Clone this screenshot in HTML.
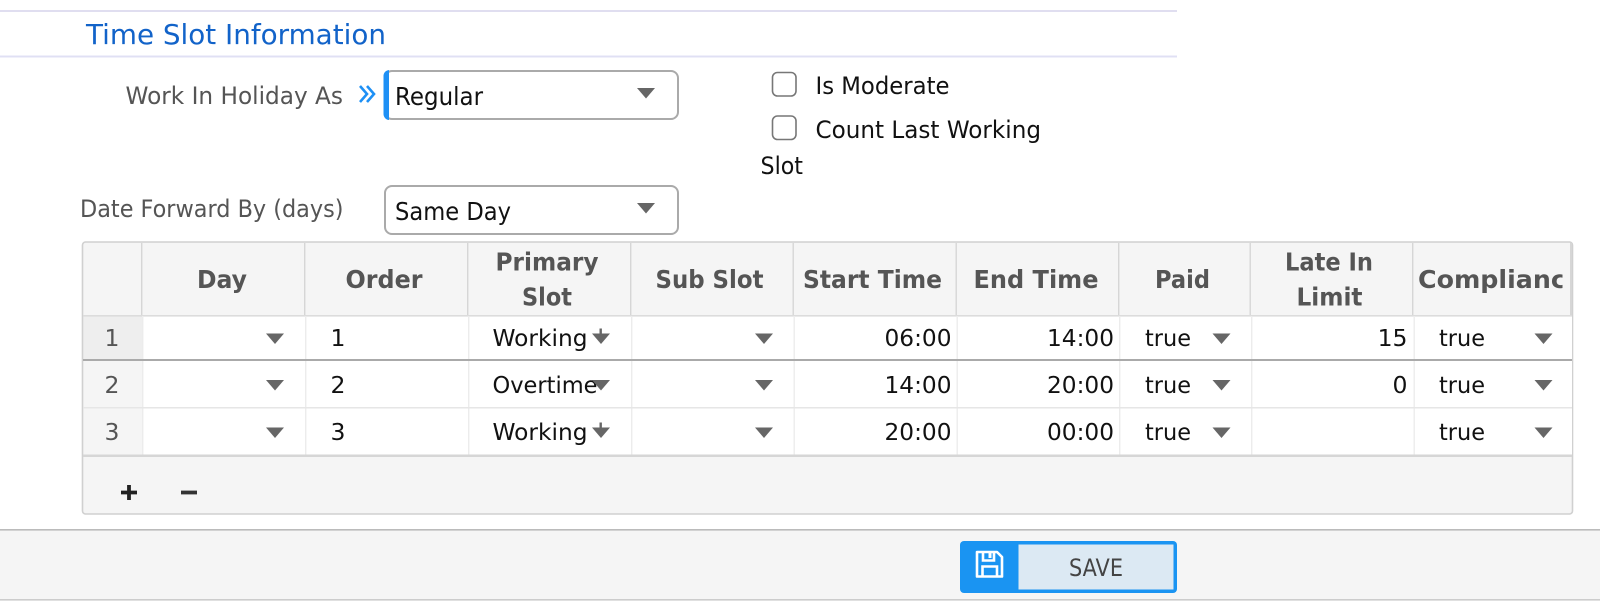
<!DOCTYPE html>
<html>
<head>
<meta charset="utf-8">
<title>Time Slot Information</title>
<style>
html,body{margin:0;padding:0;background:#fff;width:1600px;height:615px;overflow:hidden}
svg{display:block;filter:blur(0.35px)}
text{font-family:"DejaVu Sans","Liberation Sans",sans-serif;font-size:23.500px;fill:#111}
.h{font-weight:700;fill:#555;text-anchor:middle;font-size:24.500px}
.l{fill:#555;font-size:24px}
.n{fill:#555;text-anchor:middle}
.r{text-anchor:end}
.a{fill:#666}
.sel{fill:#fff;stroke:#aaa;stroke-width:2}
.cb{fill:#fff;stroke:#777;stroke-width:1.6}
</style>
</head>
<body>
<svg width="1600" height="615" viewBox="0 0 1600 615" xmlns="http://www.w3.org/2000/svg">
<defs>
<path id="ar" d="M0 0H18L9 10.5Z"/>
<clipPath id="cc"><rect x="1414" y="245" width="148.500" height="60"/></clipPath>
</defs>
<rect x="0" y="10" width="1177" height="2" fill="#e0def0"/>
<rect x="0" y="55.500" width="1177" height="2" fill="#e0e0f4"/>
<text x="86" y="44" style="font-size:28px;fill:#1263c9" textLength="300" lengthAdjust="spacingAndGlyphs">Time Slot Information</text>

<text class="l" x="125.500" y="104" textLength="217.500" lengthAdjust="spacingAndGlyphs">Work In Holiday As</text>
<path d="M360 86l7 8-7 8M367 86l7 8-7 8" fill="none" stroke="#1e90f5" stroke-width="2.600"/>
<rect class="sel" x="385" y="71" width="293" height="48" rx="7"/>
<path d="M389 70v50h-0a6 6 0 0 1-5.500-6V76a6 6 0 0 1 5.500-6z" fill="#1e90f5"/>
<text x="395" y="105" style="font-size:24.500px" textLength="88" lengthAdjust="spacingAndGlyphs">Regular</text>
<use href="#ar" x="637" y="88" class="a"/>

<text class="l" x="80" y="217" textLength="263.500" lengthAdjust="spacingAndGlyphs">Date Forward By (days)</text>
<rect class="sel" x="385" y="186" width="293" height="48" rx="7"/>
<text x="395" y="220" style="font-size:24.500px" textLength="116" lengthAdjust="spacingAndGlyphs">Same Day</text>
<use href="#ar" x="637" y="203" class="a"/>

<rect class="cb" x="772.500" y="72.500" width="23.500" height="23.500" rx="5"/>
<rect class="cb" x="772.500" y="116" width="23.500" height="23.500" rx="5"/>
<text x="815.500" y="94" style="font-size:24px" textLength="134" lengthAdjust="spacingAndGlyphs">Is Moderate</text>
<text x="815.500" y="138" style="font-size:24px" textLength="225.500" lengthAdjust="spacingAndGlyphs">Count Last Working</text>
<text x="760.500" y="174" style="font-size:24px" textLength="42.500" lengthAdjust="spacingAndGlyphs">Slot</text>

<!-- grid -->
<rect x="82.500" y="242" width="1490" height="272" rx="3" fill="#f5f5f5" stroke="#d0d0d0" stroke-width="1.600"/>
<rect x="142.500" y="316" width="1429.500" height="139" fill="#fff"/>
<rect x="83.500" y="316" width="59" height="44" fill="#eee"/>
<rect x="83" y="315" width="1489" height="1.600" fill="#dcdcdc"/>
<!-- header separators -->
<g fill="#d6d6d6">
<rect x="141" y="243" width="1.400" height="72"/>
<rect x="304" y="243" width="1.400" height="72"/>
<rect x="467" y="243" width="1.400" height="72"/>
<rect x="630" y="243" width="1.400" height="72"/>
<rect x="792.500" y="243" width="1.400" height="72"/>
<rect x="955.500" y="243" width="1.400" height="72"/>
<rect x="1118" y="243" width="1.400" height="72"/>
<rect x="1249.500" y="243" width="1.400" height="72"/>
<rect x="1412" y="243" width="1.400" height="72"/>
<rect x="1570" y="243" width="2" height="72"/>
</g>
<!-- body separators -->
<g fill="#ececec">
<rect x="142" y="316" width="1.400" height="139"/>
<rect x="305" y="316" width="1.400" height="139"/>
<rect x="468" y="316" width="1.400" height="139"/>
<rect x="631" y="316" width="1.400" height="139"/>
<rect x="793.500" y="316" width="1.400" height="139"/>
<rect x="956.500" y="316" width="1.400" height="139"/>
<rect x="1119" y="316" width="1.400" height="139"/>
<rect x="1251" y="316" width="1.400" height="139"/>
<rect x="1413.500" y="316" width="1.400" height="139"/>
</g>
<rect x="83" y="359" width="1489" height="2" fill="#aaa"/>
<rect x="83" y="407" width="1489" height="1.500" fill="#e6e6e6"/>
<rect x="83" y="454.500" width="1489" height="2.500" fill="#d6d6d6"/>

<!-- header text -->
<text class="h" x="222" y="288" textLength="50" lengthAdjust="spacingAndGlyphs">Day</text>
<text class="h" x="384" y="288" textLength="77" lengthAdjust="spacingAndGlyphs">Order</text>
<text class="h" x="547" y="270.500" textLength="103" lengthAdjust="spacingAndGlyphs">Primary</text>
<text class="h" x="547" y="305.500" textLength="50" lengthAdjust="spacingAndGlyphs">Slot</text>
<text class="h" x="709.500" y="288" textLength="108" lengthAdjust="spacingAndGlyphs">Sub Slot</text>
<text class="h" x="872.500" y="288" textLength="139" lengthAdjust="spacingAndGlyphs">Start Time</text>
<text class="h" x="1036" y="288" textLength="125" lengthAdjust="spacingAndGlyphs">End Time</text>
<text class="h" x="1182.500" y="288" textLength="55" lengthAdjust="spacingAndGlyphs">Paid</text>
<text class="h" x="1329" y="270.500" textLength="88" lengthAdjust="spacingAndGlyphs">Late In</text>
<text class="h" x="1329.500" y="305.500" textLength="66" lengthAdjust="spacingAndGlyphs">Limit</text>
<g clip-path="url(#cc)"><text class="h" style="text-anchor:start" x="1418" y="288" textLength="165" lengthAdjust="spacingAndGlyphs">Compliance</text></g>

<!-- row numbers -->
<text class="n" x="112" y="346">1</text>
<text class="n" x="112" y="393">2</text>
<text class="n" x="112" y="440">3</text>

<!-- order -->
<text x="330.500" y="346">1</text>
<text x="330.500" y="393">2</text>
<text x="330.500" y="440">3</text>

<!-- primary slot -->
<text x="492.500" y="346" textLength="95" lengthAdjust="spacingAndGlyphs">Working</text>
<text x="492.500" y="393" textLength="105" lengthAdjust="spacingAndGlyphs">Overtime</text>
<text x="492.500" y="440" textLength="95" lengthAdjust="spacingAndGlyphs">Working</text>

<!-- times -->
<text class="r" x="951.500" y="346" textLength="67" lengthAdjust="spacingAndGlyphs">06:00</text>
<text class="r" x="951.500" y="393" textLength="67" lengthAdjust="spacingAndGlyphs">14:00</text>
<text class="r" x="951.500" y="440" textLength="67" lengthAdjust="spacingAndGlyphs">20:00</text>
<text class="r" x="1114" y="346" textLength="67" lengthAdjust="spacingAndGlyphs">14:00</text>
<text class="r" x="1114" y="393" textLength="67" lengthAdjust="spacingAndGlyphs">20:00</text>
<text class="r" x="1114" y="440" textLength="67" lengthAdjust="spacingAndGlyphs">00:00</text>

<!-- paid -->
<text x="1145" y="346" textLength="46" lengthAdjust="spacingAndGlyphs">true</text>
<text x="1145" y="393" textLength="46" lengthAdjust="spacingAndGlyphs">true</text>
<text x="1145" y="440" textLength="46" lengthAdjust="spacingAndGlyphs">true</text>

<!-- late -->
<text class="r" x="1407.500" y="346">15</text>
<text class="r" x="1407.500" y="393">0</text>

<!-- compliance -->
<text x="1439" y="346" textLength="46" lengthAdjust="spacingAndGlyphs">true</text>
<text x="1439" y="393" textLength="46" lengthAdjust="spacingAndGlyphs">true</text>
<text x="1439" y="440" textLength="46" lengthAdjust="spacingAndGlyphs">true</text>

<!-- arrows -->
<g class="a">
<use href="#ar" x="266" y="333.500"/><use href="#ar" x="266" y="380"/><use href="#ar" x="266" y="427.500"/>
<use href="#ar" x="592" y="333.500"/><use href="#ar" x="592" y="380"/><use href="#ar" x="592" y="427.500"/>
<rect x="599.500" y="328.500" width="2.400" height="7"/><rect x="599.500" y="422.500" width="2.400" height="7"/>
<use href="#ar" x="755" y="333.500"/><use href="#ar" x="755" y="380"/><use href="#ar" x="755" y="427.500"/>
<use href="#ar" x="1212.500" y="333.500"/><use href="#ar" x="1212.500" y="380"/><use href="#ar" x="1212.500" y="427.500"/>
<use href="#ar" x="1534.500" y="333.500"/><use href="#ar" x="1534.500" y="380"/><use href="#ar" x="1534.500" y="427.500"/>
</g>

<!-- plus / minus -->
<path d="M121 492.500h16M129 485v15" stroke="#222" stroke-width="3.800" fill="none"/>
<path d="M181 492.500h16" stroke="#333" stroke-width="3.800" fill="none"/>

<!-- footer -->
<rect x="0" y="530" width="1600" height="70" fill="#f5f5f5"/>
<rect x="0" y="529" width="1600" height="1.600" fill="#bbb"/>
<rect x="0" y="599" width="1600" height="1.600" fill="#ccc"/>

<!-- save button -->
<rect x="960" y="541" width="217" height="52" rx="4" fill="#1a94f2"/>
<rect x="1018.500" y="544.500" width="155" height="45" fill="#dce9f3"/>
<path d="M977 552h20l5 5v19.500h-25z" fill="none" stroke="#fff" stroke-width="2.600" stroke-linejoin="round"/>
<path d="M983 552v8.500h11V552" fill="none" stroke="#fff" stroke-width="2.600"/>
<rect x="988.500" y="553" width="3" height="5" fill="#fff"/>
<path d="M982.500 576.500v-10h14.500v10" fill="none" stroke="#fff" stroke-width="2.600"/>
<text x="1069" y="576" style="fill:#444;font-size:24px" textLength="54" lengthAdjust="spacingAndGlyphs">SAVE</text>
</svg>
</body>
</html>
